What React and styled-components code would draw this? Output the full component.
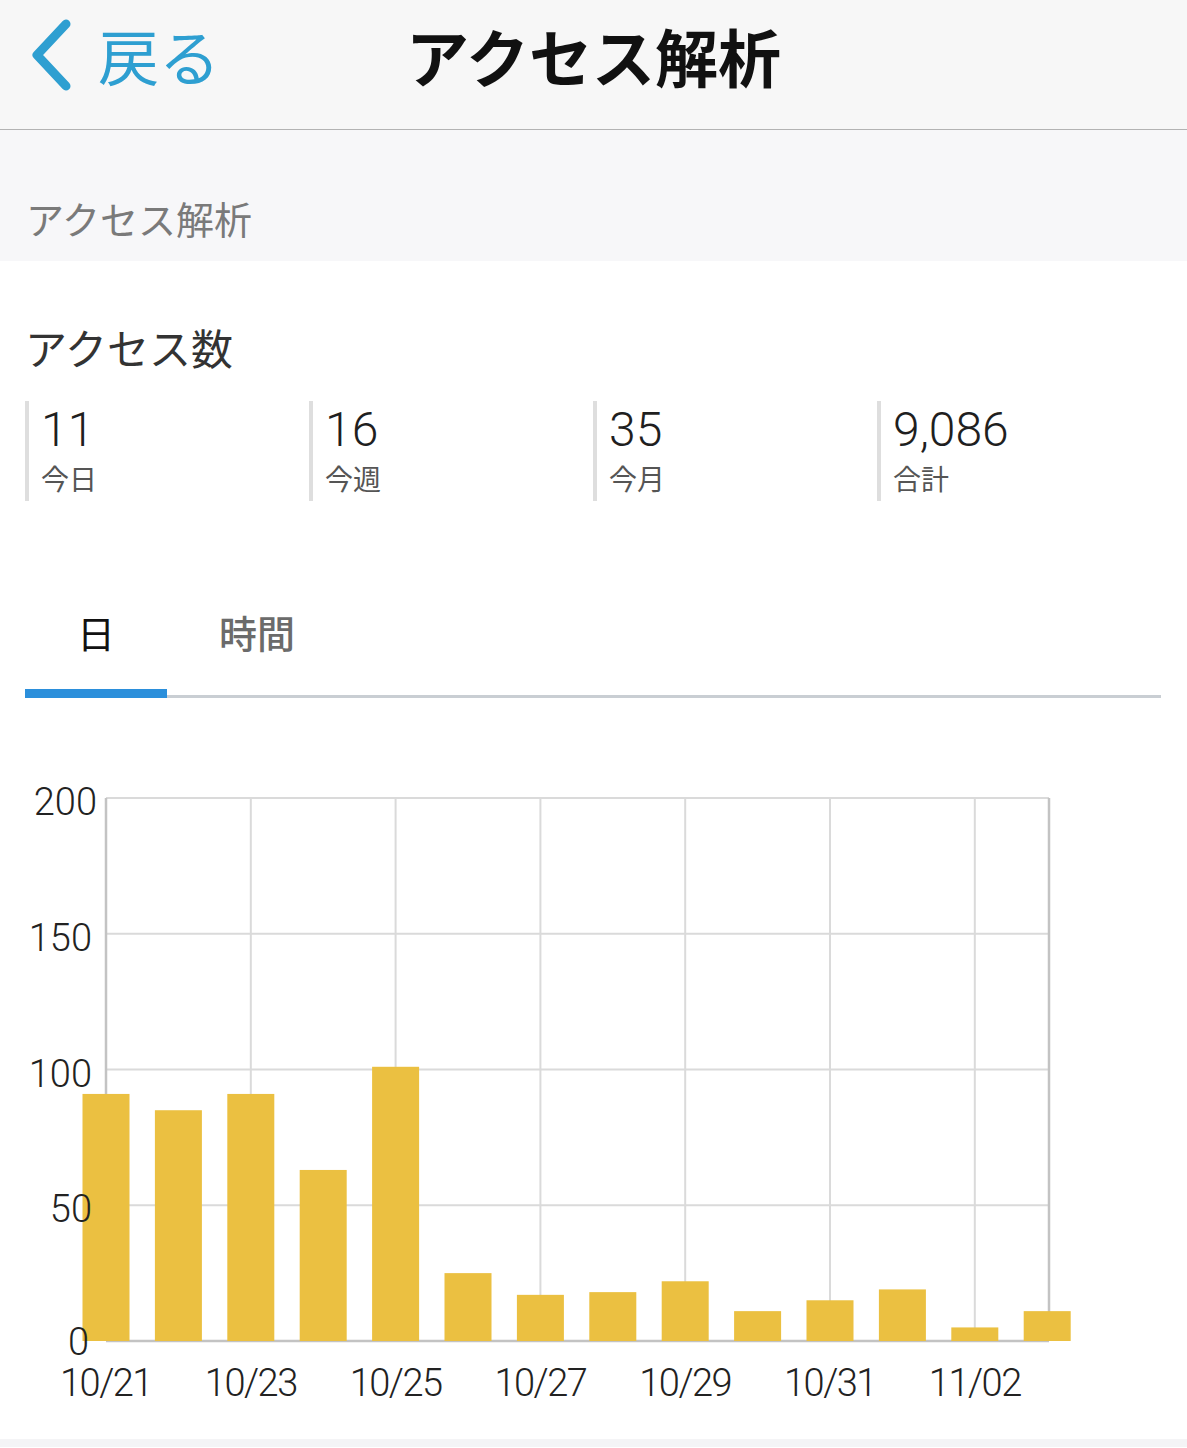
import React from 'react'
import styled, { createGlobalStyle } from 'styled-components'

const GlobalStyle = createGlobalStyle`
  body {
    margin: 0;
    background: #ffffff;
    font-family: "Noto Sans CJK JP", "Noto Sans", sans-serif;
  }
`

const stats = [
  { value: '11', label: '今日' },
  { value: '16', label: '今週' },
  { value: '35', label: '今月' },
  { value: '9,086', label: '合計' },
]

const days = ['10/21', '10/22', '10/23', '10/24', '10/25', '10/26', '10/27',
  '10/28', '10/29', '10/30', '10/31', '11/01', '11/02', '11/03']
const values = [91, 85, 91, 63, 101, 25, 17, 18, 22, 11, 15, 19, 5, 11]

// plot box in svg coords (svg starts right under the tabs)
const plot = { left: 106, right: 1049, top: 100, bottom: 643 }
const step = 72.4
const barWidth = 47
const yOf = (v) => plot.bottom - (v * (plot.bottom - plot.top)) / 200

const App = () => {
  return (
    <Page>
      <GlobalStyle />
      <Header>
        <Back>
          <svg width="46" height="74" viewBox="0 0 46 74">
            <path d="M38 6 L9 37 L38 68" fill="none" stroke="#2e9fd1"
              strokeWidth="9" strokeLinecap="round" strokeLinejoin="round" />
          </svg>
          <span>戻る</span>
        </Back>
        <Title>アクセス解析</Title>
        <div />
      </Header>

      <SectionHead>アクセス解析</SectionHead>

      <Card>
        <CardTitle>アクセス数</CardTitle>
        <StatRow>
          {stats.map((s) => (
            <Stat key={s.label}>
              <StatValue>{s.value}</StatValue>
              <StatLabel>{s.label}</StatLabel>
            </Stat>
          ))}
        </StatRow>

        <Tabs>
          <Tab active>日</Tab>
          <Tab>時間</Tab>
        </Tabs>
      </Card>

      <ChartArea>
        <svg width="1187" height="741" viewBox="0 0 1187 741">
          {[150, 100, 50].map((v) => (
            <GridLine key={v} x1={plot.left} x2={plot.right} y1={yOf(v)} y2={yOf(v)} />
          ))}
          {[1, 2, 3, 4, 5, 6].map((i) => (
            <GridLine key={i} x1={plot.left + i * 2 * step} x2={plot.left + i * 2 * step}
              y1={plot.top} y2={plot.bottom} />
          ))}
          <GridLine x1={plot.left} x2={plot.right} y1={plot.top} y2={plot.top} />
          <AxisLine x1={plot.right} x2={plot.right} y1={plot.top} y2={plot.bottom} />
          <AxisLine x1={plot.left} x2={plot.left} y1={plot.top} y2={plot.bottom} />
          <AxisLine x1={plot.left} x2={plot.right} y1={plot.bottom} y2={plot.bottom} />

          {values.map((v, i) => (
            <Bar key={days[i]}
              x={plot.left + i * step - barWidth / 2}
              y={yOf(v)}
              width={barWidth}
              height={plot.bottom - yOf(v)} />
          ))}

          {[200, 150, 100, 50].map((v) => (
            <AxisText key={v} x={v === 200 ? 97 : 92} y={yOf(v) + 17} textAnchor="end">{v}</AxisText>
          ))}
          <AxisText x={89} y={yOf(0) + 14} textAnchor="end">0</AxisText>

          {days.map((d, i) => (i % 2 === 0 ? (
            <AxisText key={d} x={plot.left + i * step} y={698} textAnchor="middle" squeeze>{d}</AxisText>
          ) : null))}
        </svg>
      </ChartArea>
      <Footer />
    </Page>
  )
}

export default App

const Page = styled.div`
  width: 1187px;
  min-height: 1448px;
  background: #ffffff;
`

const Header = styled.header`
  height: 130px;
  box-sizing: border-box;
  padding-bottom: 20px;
  background: #f7f7f7;
  border-bottom: 1px solid #b3b3b3;
  display: grid;
  grid-template-columns: 1fr auto 1fr;
  align-items: center;
`

const Back = styled.div`
  display: flex;
  align-items: center;
  gap: 24px;
  padding-left: 28px;
  color: #2e9fd1;
  font-size: 61px;
  line-height: 1;
  svg { display: block; }
`

const Title = styled.h1`
  margin: 0;
  font-size: 63px;
  font-weight: 700;
  line-height: 1;
  color: #111111;
`

const SectionHead = styled.div`
  height: 131px;
  box-sizing: border-box;
  padding: 69px 0 0 26px;
  background: #f7f7f9;
  color: #7a7a7a;
  font-size: 38px;
  line-height: 1;
`

const Card = styled.section`
  padding: 65px 26px 0 25px;
`

const CardTitle = styled.div`
  font-size: 42px;
  line-height: 1;
  color: #333333;
`

const StatRow = styled.div`
  display: grid;
  grid-template-columns: repeat(4, 284px);
  margin-top: 33px;
`

const Stat = styled.div`
  height: 100px;
  box-sizing: border-box;
  border-left: 4px solid #dedede;
  padding: 5px 0 0 12px;
`

const StatValue = styled.div`
  font-family: Roboto, "Liberation Sans", sans-serif;
  font-weight: 300;
  font-size: 48px;
  line-height: 1;
  color: #1f1f1f;
`

const StatLabel = styled.div`
  margin-top: 10px;
  font-size: 28px;
  line-height: 1;
  color: #555555;
`

const Tabs = styled.div`
  display: flex;
  margin-top: 58px;
  border-bottom: 3px solid #c9ced3;
`

const Tab = styled.div`
  padding: 54px 52px 38px;
  margin-bottom: -3px;
  font-size: 38px;
  line-height: 1;
  font-weight: ${(p) => (p.active ? 400 : 500)};
  color: ${(p) => (p.active ? '#111111' : '#6b6b6b')};
  border-bottom: 9px solid ${(p) => (p.active ? '#2b8fdb' : 'transparent')};
`

const ChartArea = styled.div`
  svg { display: block; }
`

const GridLine = styled.line`
  stroke: #dadada;
  stroke-width: 2;
`

const AxisLine = styled.line`
  stroke: #c3c3c3;
  stroke-width: 2.5;
`

const Bar = styled.rect`
  fill: #ebc041;
`

const AxisText = styled.text`
  font-family: Roboto, "Liberation Sans", sans-serif;
  font-weight: 300;
  font-size: 38px;
  fill: #222222;
  letter-spacing: ${(p) => (p.squeeze ? '-1.5px' : '0')};
`

const Footer = styled.div`
  height: 8px;
  background: #f4f4f6;
`
